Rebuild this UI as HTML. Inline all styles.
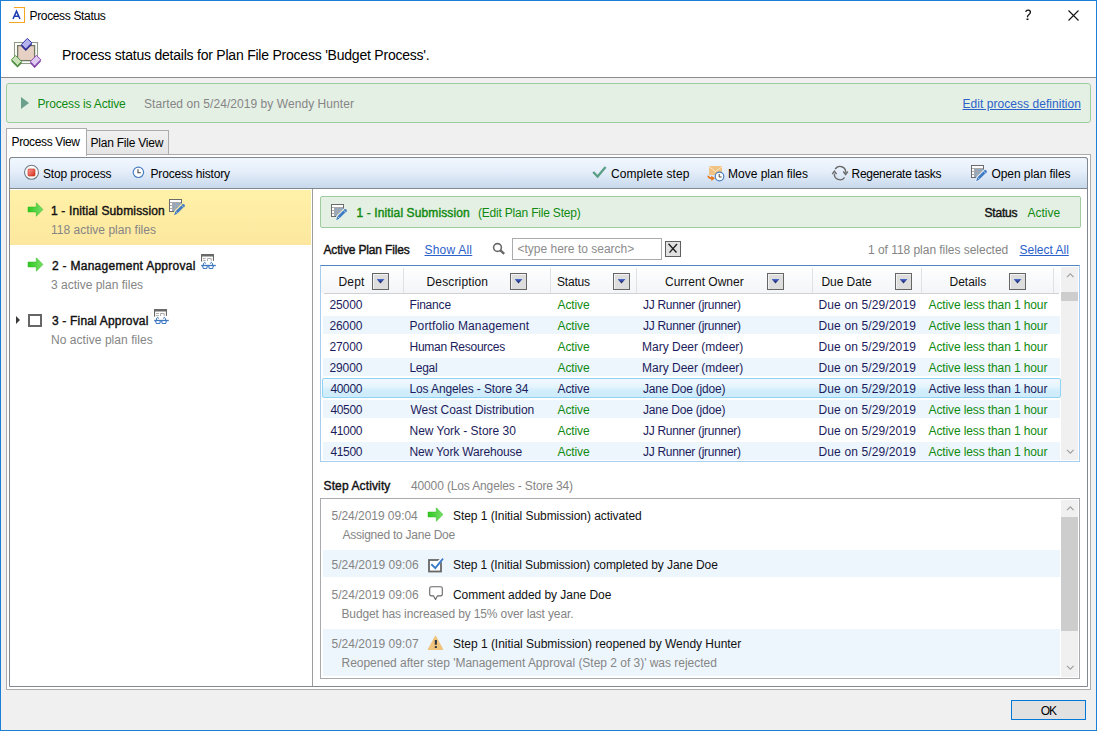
<!DOCTYPE html>
<html><head><meta charset="utf-8"><title>Process Status</title>
<style>
html,body{margin:0;padding:0;width:1097px;height:731px;overflow:hidden;background:#f0f0f0}
.a{position:absolute;box-sizing:border-box}
.t{position:absolute;white-space:nowrap;font-family:'Liberation Sans',sans-serif;line-height:1}
svg{position:absolute;overflow:visible}
.fb{position:absolute;box-sizing:border-box;width:17px;height:17px;border:1px solid #656565;background:#dddddd;box-shadow:inset 1px 1px 0 #f2f2f2}
.fb:after{content:"";position:absolute;left:3.5px;top:5px;width:8px;height:4.5px;clip-path:polygon(0 0,100% 0,50% 100%);background:linear-gradient(#4f6fd6,#283a8a 50%,#1a1a3a)}
.sep{position:absolute;width:1px;top:268px;height:25px;background:#dfe1e4}
.band{position:absolute;background:#eef6fd}
</style></head><body>
<!-- window frame -->
<div class="a" style="left:0;top:0;width:1097px;height:731px;border:1px solid #1a7fd5;background:#f0f0f0"></div>
<div class="a" style="left:1px;top:1px;width:1095px;height:76px;background:#fff"></div>
<div class="a" style="left:1px;top:77px;width:1095px;height:1px;background:#8c8c8c"></div>

<!-- app icon -->
<div class="a" style="left:14px;top:7px;width:11px;height:1px;background:#f5a623"></div>
<div class="a" style="left:24px;top:7px;width:1px;height:16px;background:#f5a623"></div>
<div class="a" style="left:9px;top:22px;width:16px;height:1px;background:#f5a623"></div>
<svg style="left:12px;top:10px" width="9" height="10" viewBox="0 0 9 10"><path d="M1 9 L4.5 1.2 L8 9 M2.4 6.3 H6.6" fill="none" stroke="#1e3cb4" stroke-width="1.5"/></svg>
<!-- help and close -->
<svg style="left:1024px;top:9px" width="10" height="12" viewBox="0 0 10 12"><path d="M1.9 2.3 Q2.9 1 4.5 1.1 Q6.5 1.4 6.4 3.3 Q6.3 4.7 4.8 5.8 Q3.5 6.8 3.5 7.8" fill="none" stroke="#111" stroke-width="1.35" stroke-linecap="round"/><rect x="2.5" y="9.5" width="2" height="1.5" fill="#111"/></svg>
<svg style="left:1068px;top:10px" width="11" height="11" viewBox="0 0 11 11"><path d="M0.5 0.5 L10.5 10.5 M10.5 0.5 L0.5 10.5" stroke="#111" stroke-width="1.1"/></svg>

<!-- header icon -->
<svg style="left:8px;top:34px" width="40" height="38" viewBox="0 0 40 38"><rect x="6.5" y="8.5" width="23" height="21" fill="#fff" stroke="#8f9c86" stroke-width="1.1"/><rect x="9.6" y="11.6" width="17" height="15" fill="#e6cfc3" stroke="#6f7a62" stroke-width="1.3"/><path d="M13.4 10.6 L17.8 15 L23.8 8.8 L23.8 10.8 L17.8 17 L13.4 12.6 Z" fill="#28268e"/><path d="M13.4 10.6 L19.3 4.4 L23.8 8.8 L17.8 15 Z" fill="#b4b2ec" stroke="#3532a8" stroke-width="1" stroke-linejoin="round"/><path d="M3.5 25.6 L9.5 31.6 L13.6 27.4 L13.6 29.4 L9.5 33.6 L3.5 27.6 Z" fill="#4a8a3a"/><path d="M3.5 25.6 L7.6 21.6 L13.6 27.4 L9.5 31.6 Z" fill="#c9e0b9" stroke="#5b9a4a" stroke-width="1" stroke-linejoin="round"/><path d="M22.4 27.6 L26.6 32 L32.8 25.6 L32.8 27.6 L26.6 34 L22.4 29.6 Z" fill="#7a389f"/><path d="M22.4 27.6 L28.4 21.4 L32.8 25.6 L26.6 32 Z" fill="#dfcaf2" stroke="#8f4fb8" stroke-width="1" stroke-linejoin="round"/></svg>

<!-- status bar -->
<div class="a" style="left:6px;top:83px;width:1085px;height:40px;border:1px solid #9fcc9f;border-radius:3px;background:#e5f0e5"></div>
<svg style="left:21px;top:97px" width="9" height="13" viewBox="0 0 9 13"><path d="M0 0 L8 6 L0 12 Z" fill="#6aa08c"/></svg>

<!-- tabs -->
<div class="a" style="left:86px;top:130px;width:83px;height:25px;border:1px solid #acacac;background:linear-gradient(#f0f0f0,#e5e5e5)"></div>
<div class="a" style="left:6px;top:154px;width:1085px;height:536px;border:1px solid #acacac;background:#fff"></div>
<div class="a" style="left:6px;top:128px;width:81px;height:28px;border:1px solid #acacac;border-bottom:0;background:#fff"></div>

<!-- inner content -->
<div class="a" style="left:9px;top:157px;width:1079px;height:530px;border:1px solid #828790;border-radius:3px 3px 0 0;background:#fff"></div>
<div class="a" style="left:9px;top:157px;width:1079px;height:32px;border:1px solid #828790;border-radius:3px 3px 0 0;background:linear-gradient(#f1f7fe,#e5eefa 45%,#c8d9ec)"></div>

<!-- toolbar icons -->
<svg style="left:23px;top:164px" width="17" height="17" viewBox="0 0 17 17">
  <defs><linearGradient id="rg" x1="0" y1="0" x2="1" y2="1"><stop offset="0" stop-color="#ff9a9a"/><stop offset="1" stop-color="#d0301a"/></linearGradient></defs>
  <circle cx="8.5" cy="8.3" r="7" fill="#fafafa" stroke="#6f7c88" stroke-width="1.1"/>
  <rect x="5" y="5" width="7" height="7" rx="1" fill="url(#rg)" stroke="#c02810" stroke-width="0.6"/>
</svg>
<svg style="left:132px;top:166px" width="13" height="13" viewBox="0 0 13 13">
  <circle cx="6.4" cy="6.3" r="5.2" fill="#fff" stroke="#4a7fc0" stroke-width="1.2"/>
  <path d="M6 3.2 V6.8 H8.8" fill="none" stroke="#444" stroke-width="1.1"/>
</svg>
<svg style="left:590px;top:164px" width="18" height="16" viewBox="0 0 18 16"><path d="M3.2 8 L7.6 12.6 L15.6 3" fill="none" stroke="#5a9e84" stroke-width="2.3"/></svg>
<svg style="left:706px;top:164px" width="20" height="19" viewBox="0 0 20 19">
  <rect x="3" y="2" width="13" height="9" fill="#f0c384"/>
  <path d="M3 2.5 L9.5 7.5 L16 2.5" fill="none" stroke="#fbe6c4" stroke-width="1"/>
  <circle cx="13.5" cy="12.5" r="4.3" fill="#fff" stroke="#4a80c0" stroke-width="1.2"/>
  <path d="M13.2 10 V13 H15.6" fill="none" stroke="#444" stroke-width="1"/>
  <path d="M2.2 11.8 Q2.4 14.4 6 14.4" fill="none" stroke="#e8761c" stroke-width="1.7"/><path d="M5.2 11.8 L9 14.3 L5.4 16.9 Z" fill="#e8761c"/>
</svg>
<svg style="left:830px;top:164px" width="20" height="18" viewBox="0 0 20 18">
  <path d="M5.2 5.2 A5.6 5.6 0 0 1 15.6 8.6" fill="none" stroke="#6a6a6a" stroke-width="1.4"/>
  <path d="M14.6 13.3 A5.6 5.6 0 0 1 4.4 9.6" fill="none" stroke="#6a6a6a" stroke-width="1.4"/>
  <path d="M13.3 7.5 L15.6 10.5 L17.8 7.5" fill="none" stroke="#6a6a6a" stroke-width="1.4"/>
  <path d="M2.2 10.2 L4.4 7.2 L6.6 10.2" fill="none" stroke="#6a6a6a" stroke-width="1.4"/>
</svg>
<!-- open plan files icon (grid + pencil) -->
<svg style="left:970px;top:164px" width="20" height="20" viewBox="0 0 20 20"><rect x="1" y="1" width="13" height="13" fill="#6b6b6b"/><rect x="2" y="2" width="11" height="11" fill="#a9a9a9"/><rect x="2" y="2" width="11" height="2" fill="#fff"/><rect x="2" y="5" width="2" height="2" fill="#fff"/><rect x="5" y="5" width="2" height="2" fill="rgba(95,165,240,0.38)"/><rect x="8" y="5" width="2" height="2" fill="rgba(95,165,240,0.38)"/><rect x="11" y="5" width="2" height="2" fill="rgba(95,165,240,0.38)"/><rect x="2" y="8" width="2" height="2" fill="#fff"/><rect x="5" y="8" width="2" height="2" fill="rgba(95,165,240,0.38)"/><rect x="8" y="8" width="2" height="2" fill="rgba(95,165,240,0.38)"/><rect x="11" y="8" width="2" height="2" fill="rgba(95,165,240,0.38)"/><rect x="2" y="11" width="2" height="2" fill="#fff"/><rect x="5" y="11" width="2" height="2" fill="rgba(95,165,240,0.38)"/><rect x="8" y="11" width="2" height="2" fill="rgba(95,165,240,0.38)"/><rect x="11" y="11" width="2" height="2" fill="rgba(95,165,240,0.38)"/><path d="M5.8 14.2 L14.2 14.2 L14.2 5.8 Z" fill="#e0eaf6"/><path d="M6.2 17.2 L7.3 13.6 L13.6 7.3 L15.6 9.3 L9.3 15.6 Z" fill="#e0eaf6" stroke="#e0eaf6" stroke-width="2.2" stroke-linejoin="round"/><circle cx="15.2" cy="7.7" r="2.6" fill="#e0eaf6"/><path d="M6.2 17.2 L7.3 13.6 L13.6 7.3 L15.6 9.3 L9.3 15.6 Z" fill="#3f7bc4"/><circle cx="15.2" cy="7.7" r="1.7" fill="#3f7bc4"/><path d="M7.6 13.3 L10 15.8 M13.2 7 L15.9 9.6" stroke="#e0eaf6" stroke-width="0.7"/></svg>

<!-- left list -->
<div class="a" style="left:10px;top:190px;width:301px;height:55px;background:linear-gradient(#fff2a8,#fde79f)"></div>
<div class="a" style="left:312px;top:189px;width:1px;height:497px;background:#9c9c9c"></div>
<svg style="left:27px;top:202px" width="17" height="15" viewBox="0 0 17 15"><defs><linearGradient id="ga" x1="0" x2="1"><stop offset="0" stop-color="#2ec81e"/><stop offset="1" stop-color="#7ade6a"/></linearGradient></defs><path d="M1 5 H9.3 V0.8 L16 7.5 L9.3 14.2 V10 H1 Z" fill="url(#ga)" stroke="#2eb81e" stroke-width="0.5"/></svg>
<svg style="left:27px;top:257px" width="17" height="15" viewBox="0 0 17 15"><path d="M1 5 H9.3 V0.8 L16 7.5 L9.3 14.2 V10 H1 Z" fill="url(#ga)" stroke="#2eb81e" stroke-width="0.5"/></svg>
<svg style="left:168px;top:198px" width="20" height="20" viewBox="0 0 20 20"><rect x="1" y="1" width="13" height="13" fill="#6b6b6b"/><rect x="2" y="2" width="11" height="11" fill="#a9a9a9"/><rect x="2" y="2" width="11" height="2" fill="#fff"/><rect x="2" y="5" width="2" height="2" fill="#fff"/><rect x="5" y="5" width="2" height="2" fill="rgba(95,165,240,0.38)"/><rect x="8" y="5" width="2" height="2" fill="rgba(95,165,240,0.38)"/><rect x="11" y="5" width="2" height="2" fill="rgba(95,165,240,0.38)"/><rect x="2" y="8" width="2" height="2" fill="#fff"/><rect x="5" y="8" width="2" height="2" fill="rgba(95,165,240,0.38)"/><rect x="8" y="8" width="2" height="2" fill="rgba(95,165,240,0.38)"/><rect x="11" y="8" width="2" height="2" fill="rgba(95,165,240,0.38)"/><rect x="2" y="11" width="2" height="2" fill="#fff"/><rect x="5" y="11" width="2" height="2" fill="rgba(95,165,240,0.38)"/><rect x="8" y="11" width="2" height="2" fill="rgba(95,165,240,0.38)"/><rect x="11" y="11" width="2" height="2" fill="rgba(95,165,240,0.38)"/><path d="M5.8 14.2 L14.2 14.2 L14.2 5.8 Z" fill="#fdeba6"/><path d="M6.2 17.2 L7.3 13.6 L13.6 7.3 L15.6 9.3 L9.3 15.6 Z" fill="#fdeba6" stroke="#fdeba6" stroke-width="2.2" stroke-linejoin="round"/><circle cx="15.2" cy="7.7" r="2.6" fill="#fdeba6"/><path d="M6.2 17.2 L7.3 13.6 L13.6 7.3 L15.6 9.3 L9.3 15.6 Z" fill="#3f7bc4"/><circle cx="15.2" cy="7.7" r="1.7" fill="#3f7bc4"/><path d="M7.6 13.3 L10 15.8 M13.2 7 L15.9 9.6" stroke="#fdeba6" stroke-width="0.7"/></svg>
<svg style="left:196px;top:250px" width="22" height="22" viewBox="0 0 22 22"><rect x="5" y="4" width="13" height="2.5" fill="#6a6a6a"/><rect x="5" y="4" width="1.1" height="7.6" fill="#6a6a6a"/><rect x="16.9" y="4" width="1.1" height="6.9" fill="#6a6a6a"/><path d="M7 8.5 H9.8 M7 10.6 H9.8 M11.5 11 V8.5 H15.2 V11" fill="none" stroke="#a4a4a4" stroke-width="0.9"/><path d="M5.2 15.5 H19.8" stroke="#3d78c0" stroke-width="1.3"/><path d="M6.4 15.5 L7.2 17.9 Q7.5 18.5 8.3 18.5 H10 Q10.8 18.5 11 17.8 L11.3 15.5 M17.6 15.5 L16.8 17.9 Q16.5 18.5 15.7 18.5 H14 Q13.2 18.5 13 17.8 L12.7 15.5" fill="none" stroke="#3d78c0" stroke-width="1.1"/><path d="M7.3 15.2 Q7.6 12.3 8.6 12.4 Q9.5 12.5 9.6 13.6 M16.7 15.2 Q16.4 12.3 15.4 12.4 Q14.5 12.5 14.4 13.6" fill="none" stroke="#3d78c0" stroke-width="1"/></svg>
<svg style="left:15px;top:315px" width="6" height="10" viewBox="0 0 6 10"><path d="M1 1 L5 5 L1 9 Z" fill="#3a3a3a"/></svg>
<div class="a" style="left:28px;top:314px;width:14px;height:13px;border:2px solid #666;background:#fff"></div>
<svg style="left:149px;top:305px" width="22" height="22" viewBox="0 0 22 22"><rect x="5" y="4" width="13" height="2.5" fill="#6a6a6a"/><rect x="5" y="4" width="1.1" height="7.6" fill="#6a6a6a"/><rect x="16.9" y="4" width="1.1" height="6.9" fill="#6a6a6a"/><path d="M7 8.5 H9.8 M7 10.6 H9.8 M11.5 11 V8.5 H15.2 V11" fill="none" stroke="#a4a4a4" stroke-width="0.9"/><path d="M5.2 15.5 H19.8" stroke="#3d78c0" stroke-width="1.3"/><path d="M6.4 15.5 L7.2 17.9 Q7.5 18.5 8.3 18.5 H10 Q10.8 18.5 11 17.8 L11.3 15.5 M17.6 15.5 L16.8 17.9 Q16.5 18.5 15.7 18.5 H14 Q13.2 18.5 13 17.8 L12.7 15.5" fill="none" stroke="#3d78c0" stroke-width="1.1"/><path d="M7.3 15.2 Q7.6 12.3 8.6 12.4 Q9.5 12.5 9.6 13.6 M16.7 15.2 Q16.4 12.3 15.4 12.4 Q14.5 12.5 14.4 13.6" fill="none" stroke="#3d78c0" stroke-width="1"/></svg>

<!-- step box -->
<div class="a" style="left:320px;top:196px;width:761px;height:32px;border:1px solid #9fcc9f;border-radius:2px;background:#e5f0e5"></div>
<svg style="left:330px;top:203px" width="20" height="20" viewBox="0 0 20 20"><rect x="1" y="1" width="13" height="13" fill="#6b6b6b"/><rect x="2" y="2" width="11" height="11" fill="#a9a9a9"/><rect x="2" y="2" width="11" height="2" fill="#fff"/><rect x="2" y="5" width="2" height="2" fill="#fff"/><rect x="5" y="5" width="2" height="2" fill="rgba(95,165,240,0.38)"/><rect x="8" y="5" width="2" height="2" fill="rgba(95,165,240,0.38)"/><rect x="11" y="5" width="2" height="2" fill="rgba(95,165,240,0.38)"/><rect x="2" y="8" width="2" height="2" fill="#fff"/><rect x="5" y="8" width="2" height="2" fill="rgba(95,165,240,0.38)"/><rect x="8" y="8" width="2" height="2" fill="rgba(95,165,240,0.38)"/><rect x="11" y="8" width="2" height="2" fill="rgba(95,165,240,0.38)"/><rect x="2" y="11" width="2" height="2" fill="#fff"/><rect x="5" y="11" width="2" height="2" fill="rgba(95,165,240,0.38)"/><rect x="8" y="11" width="2" height="2" fill="rgba(95,165,240,0.38)"/><rect x="11" y="11" width="2" height="2" fill="rgba(95,165,240,0.38)"/><path d="M5.8 14.2 L14.2 14.2 L14.2 5.8 Z" fill="#e5f0e5"/><path d="M6.2 17.2 L7.3 13.6 L13.6 7.3 L15.6 9.3 L9.3 15.6 Z" fill="#e5f0e5" stroke="#e5f0e5" stroke-width="2.2" stroke-linejoin="round"/><circle cx="15.2" cy="7.7" r="2.6" fill="#e5f0e5"/><path d="M6.2 17.2 L7.3 13.6 L13.6 7.3 L15.6 9.3 L9.3 15.6 Z" fill="#3f7bc4"/><circle cx="15.2" cy="7.7" r="1.7" fill="#3f7bc4"/><path d="M7.6 13.3 L10 15.8 M13.2 7 L15.9 9.6" stroke="#e5f0e5" stroke-width="0.7"/></svg>

<!-- search -->
<svg style="left:491px;top:241px" width="17" height="17" viewBox="0 0 17 17"><circle cx="6.5" cy="6.5" r="3.9" fill="none" stroke="#6a6a6a" stroke-width="1.6"/><path d="M9.2 9.2 L13.2 12.8" stroke="#6a6a6a" stroke-width="2.4"/></svg>
<div class="a" style="left:512px;top:238px;width:150px;height:22px;border:1px solid #ababab;background:#fff"></div>
<div class="a" style="left:665px;top:241px;width:16px;height:16px;border:1px solid #5f5f5f;background:#e1e1e1"></div>
<svg style="left:665px;top:241px" width="16" height="16" viewBox="0 0 16 16"><path d="M3.5 2.8 L11.5 11.5 M12 3 L4.5 11.6" stroke="#222" stroke-width="1.4"/></svg>

<!-- grid -->
<div class="a" style="left:320px;top:265px;width:760px;height:197px;border:1px solid #a7cdef;border-top-color:#4f86bd;background:#fff"></div>
<div class="a" style="left:321px;top:266px;width:739px;height:27px;background:linear-gradient(#fff,#f3f5f8)"></div>
<div class="a" style="left:324px;top:293px;width:735px;height:1px;background:#cfd1d4"></div>
<div class="sep" style="left:403px"></div><div class="sep" style="left:550px"></div><div class="sep" style="left:636px"></div><div class="sep" style="left:812px"></div><div class="sep" style="left:921px"></div><div class="sep" style="left:1053px"></div>
<div class="fb" style="left:372px;top:273px"></div><div class="fb" style="left:510px;top:273px"></div><div class="fb" style="left:613px;top:273px"></div><div class="fb" style="left:767px;top:273px"></div><div class="fb" style="left:895px;top:273px"></div><div class="fb" style="left:1009px;top:273px"></div>
<div class="band" style="left:323px;top:316px;width:737px;height:18px"></div>
<div class="band" style="left:323px;top:358px;width:737px;height:18px"></div>
<div class="band" style="left:323px;top:400px;width:737px;height:18px"></div>
<div class="band" style="left:323px;top:442px;width:737px;height:18px"></div>
<div class="a" style="left:322px;top:378px;width:739px;height:20px;border:1px solid #8fd3f5;border-radius:2px;background:linear-gradient(#f1f9fe,#e4f4fd 45%,#d3eefc 60%,#cdebfb)"></div>
<div class="a" style="left:1061px;top:267px;width:17px;height:193px;background:#f0f0f0"></div>
<div class="a" style="left:1061px;top:292px;width:17px;height:9px;background:#cdcdcd"></div>
<svg style="left:1066px;top:272px" width="9" height="7" viewBox="0 0 9 7"><path d="M1 5.2 L4.3 1.8 L7.6 5.2" fill="none" stroke="#a0a0a0" stroke-width="1.2"/></svg>
<svg style="left:1066px;top:448px" width="9" height="7" viewBox="0 0 9 7"><path d="M1 1.8 L4.3 5.2 L7.6 1.8" fill="none" stroke="#a0a0a0" stroke-width="1.2"/></svg>

<!-- step activity -->
<div class="a" style="left:320px;top:498px;width:760px;height:181px;border:1px solid #a9abae;background:#fff"></div>
<div class="band" style="left:323px;top:550px;width:737px;height:27px"></div>
<div class="band" style="left:323px;top:629px;width:737px;height:47px"></div>
<div class="a" style="left:1061px;top:500px;width:17px;height:177px;background:#f0f0f0"></div>
<div class="a" style="left:1061px;top:517px;width:17px;height:114px;background:#cdcdcd"></div>
<svg style="left:1066px;top:505px" width="9" height="7" viewBox="0 0 9 7"><path d="M1 5.2 L4.3 1.8 L7.6 5.2" fill="none" stroke="#a0a0a0" stroke-width="1.2"/></svg>
<svg style="left:1066px;top:664px" width="9" height="7" viewBox="0 0 9 7"><path d="M1 1.8 L4.3 5.2 L7.6 1.8" fill="none" stroke="#a0a0a0" stroke-width="1.2"/></svg>
<svg style="left:427px;top:507px" width="17" height="15" viewBox="0 0 17 15"><path d="M1 5 H9.3 V0.8 L16 7.5 L9.3 14.2 V10 H1 Z" fill="url(#ga)" stroke="#2eb81e" stroke-width="0.5"/></svg>
<svg style="left:427px;top:556px" width="17" height="17" viewBox="0 0 17 17"><rect x="2" y="4" width="12" height="11.5" fill="#fff" stroke="#666" stroke-width="1.8"/><path d="M12 6 L16 2.6" fill="none" stroke="#fff" stroke-width="3.4"/><path d="M4.3 8.3 L8.3 12 L16 2.6" fill="none" stroke="#3c7ccc" stroke-width="1.9"/></svg>
<svg style="left:427px;top:585px" width="17" height="16" viewBox="0 0 17 16"><path d="M4.4 1.8 H13.6 Q15.3 1.8 15.3 3.5 V9.2 Q15.3 10.9 13.6 10.9 H10.4 L8.5 14.4 L6.6 10.9 H4.4 Q2.7 10.9 2.7 9.2 V3.5 Q2.7 1.8 4.4 1.8 Z" fill="#fff" stroke="#666" stroke-width="1.1" stroke-linejoin="round"/></svg>
<svg style="left:427px;top:635px" width="17" height="16" viewBox="0 0 17 16"><path d="M8.5 1.3 L15.6 14.3 H1.4 Z" fill="#f0c47c" stroke="#f0c47c" stroke-width="1.2" stroke-linejoin="round"/><rect x="7.8" y="5" width="2.1" height="4.7" fill="#30343c"/><rect x="7.8" y="11.1" width="2.1" height="1.9" fill="#30343c"/></svg>

<!-- OK button -->
<div class="a" style="left:1011px;top:700px;width:75px;height:20px;border:1px solid #0078d7;background:#e1e1e1"></div>


<div class="t" style="left:29.50px;top:10px;font-size:12px;font-weight:normal;color:#000;letter-spacing:-0.346px;">Process Status</div>
<div class="t" style="left:62.00px;top:48px;font-size:14px;font-weight:normal;color:#000;letter-spacing:-0.221px;">Process status details for Plan File Process 'Budget Process'.</div>
<div class="t" style="left:37.50px;top:98px;font-size:12px;font-weight:normal;color:#108a10;letter-spacing:-0.156px;">Process is Active</div>
<div class="t" style="left:144.00px;top:98px;font-size:12px;font-weight:normal;color:#858585;letter-spacing:0.057px;">Started on 5/24/2019 by Wendy Hunter</div>
<div class="t" style="left:962.50px;top:98px;font-size:12px;font-weight:normal;color:#2a62c9;letter-spacing:0.045px;text-decoration:underline">Edit process definition</div>
<div class="t" style="left:11.50px;top:136px;font-size:12px;font-weight:normal;color:#000;letter-spacing:-0.364px;">Process View</div>
<div class="t" style="left:90.50px;top:137px;font-size:12px;font-weight:normal;color:#000;letter-spacing:-0.231px;">Plan File View</div>
<div class="t" style="left:43.00px;top:168px;font-size:12px;font-weight:normal;color:#000;letter-spacing:-0.136px;">Stop process</div>
<div class="t" style="left:150.50px;top:168px;font-size:12px;font-weight:normal;color:#000;letter-spacing:-0.179px;">Process history</div>
<div class="t" style="left:611.00px;top:168px;font-size:12px;font-weight:normal;color:#000;letter-spacing:0.083px;">Complete step</div>
<div class="t" style="left:728.00px;top:168px;font-size:12px;font-weight:normal;color:#000;letter-spacing:0.000px;">Move plan files</div>
<div class="t" style="left:851.50px;top:168px;font-size:12px;font-weight:normal;color:#000;letter-spacing:-0.267px;">Regenerate tasks</div>
<div class="t" style="left:991.50px;top:168px;font-size:12px;font-weight:normal;color:#000;letter-spacing:-0.071px;">Open plan files</div>
<div class="t" style="left:51.00px;top:205px;font-size:12px;font-weight:normal;-webkit-text-stroke:0.4px #111;color:#111;letter-spacing:0.143px;">1 - Initial Submission</div>
<div class="t" style="left:51.00px;top:224px;font-size:12px;font-weight:normal;color:#858585;letter-spacing:0.025px;">118 active plan files</div>
<div class="t" style="left:52.00px;top:260px;font-size:12px;font-weight:normal;-webkit-text-stroke:0.4px #111;color:#111;letter-spacing:0.273px;">2 - Management Approval</div>
<div class="t" style="left:51.00px;top:279px;font-size:12px;font-weight:normal;color:#858585;letter-spacing:0.000px;">3 active plan files</div>
<div class="t" style="left:52.00px;top:315px;font-size:12px;font-weight:normal;-webkit-text-stroke:0.4px #111;color:#111;letter-spacing:0.176px;">3 - Final Approval</div>
<div class="t" style="left:51.00px;top:334px;font-size:12px;font-weight:normal;color:#858585;letter-spacing:0.053px;">No active plan files</div>
<div class="t" style="left:356.50px;top:207px;font-size:12px;font-weight:normal;-webkit-text-stroke:0.4px #108a10;color:#108a10;letter-spacing:0.119px;">1 - Initial Submission</div>
<div class="t" style="left:478.00px;top:207px;font-size:12px;font-weight:normal;color:#108a10;letter-spacing:-0.200px;">(Edit Plan File Step)</div>
<div class="t" style="left:984.50px;top:207px;font-size:12px;font-weight:normal;-webkit-text-stroke:0.4px #111;color:#111;letter-spacing:-0.200px;">Status</div>
<div class="t" style="left:1027.50px;top:207px;font-size:12px;font-weight:normal;color:#108a10;letter-spacing:0.000px;">Active</div>
<div class="t" style="left:323.50px;top:244px;font-size:12px;font-weight:normal;-webkit-text-stroke:0.4px #111;color:#111;letter-spacing:-0.156px;">Active Plan Files</div>
<div class="t" style="left:424.50px;top:244px;font-size:12px;font-weight:normal;color:#2a62c9;letter-spacing:0.214px;text-decoration:underline">Show All</div>
<div class="t" style="left:517.50px;top:243px;font-size:12px;font-weight:normal;color:#8c8c8c;letter-spacing:0.000px;">&lt;type here to search&gt;</div>
<div class="t" style="left:868.00px;top:244px;font-size:12px;font-weight:normal;color:#858585;letter-spacing:-0.037px;">1 of 118 plan files selected</div>
<div class="t" style="left:1019.50px;top:244px;font-size:12px;font-weight:normal;color:#2a62c9;letter-spacing:0.000px;text-decoration:underline">Select All</div>
<div class="t" style="left:338.50px;top:276px;font-size:12px;font-weight:normal;color:#111;letter-spacing:0.167px;">Dept</div>
<div class="t" style="left:426.50px;top:276px;font-size:12px;font-weight:normal;color:#111;letter-spacing:0.150px;">Description</div>
<div class="t" style="left:557.00px;top:276px;font-size:12px;font-weight:normal;color:#111;letter-spacing:-0.200px;">Status</div>
<div class="t" style="left:665.00px;top:276px;font-size:12px;font-weight:normal;color:#111;letter-spacing:0.000px;">Current Owner</div>
<div class="t" style="left:821.50px;top:276px;font-size:12px;font-weight:normal;color:#111;letter-spacing:-0.071px;">Due Date</div>
<div class="t" style="left:949.50px;top:276px;font-size:12px;font-weight:normal;color:#111;letter-spacing:0.000px;">Details</div>
<div class="t" style="left:329.50px;top:299px;font-size:12px;font-weight:normal;color:#1c1c5c;letter-spacing:-0.125px;">25000</div>
<div class="t" style="left:409.50px;top:299px;font-size:12px;font-weight:normal;color:#1c1c5c;letter-spacing:-0.183px;">Finance</div>
<div class="t" style="left:557.50px;top:299px;font-size:12px;font-weight:normal;color:#108a10;letter-spacing:-0.100px;">Active</div>
<div class="t" style="left:643.00px;top:299px;font-size:12px;font-weight:normal;color:#1c1c5c;letter-spacing:-0.300px;">JJ Runner (jrunner)</div>
<div class="t" style="left:818.50px;top:299px;font-size:12px;font-weight:normal;color:#1c1c5c;letter-spacing:0.133px;">Due on 5/29/2019</div>
<div class="t" style="left:928.50px;top:299px;font-size:12px;font-weight:normal;color:#108a10;letter-spacing:-0.114px;">Active less than 1 hour</div>
<div class="t" style="left:329.50px;top:320px;font-size:12px;font-weight:normal;color:#1c1c5c;letter-spacing:-0.125px;">26000</div>
<div class="t" style="left:409.50px;top:320px;font-size:12px;font-weight:normal;color:#1c1c5c;letter-spacing:0.111px;">Portfolio Management</div>
<div class="t" style="left:557.50px;top:320px;font-size:12px;font-weight:normal;color:#108a10;letter-spacing:-0.100px;">Active</div>
<div class="t" style="left:643.00px;top:320px;font-size:12px;font-weight:normal;color:#1c1c5c;letter-spacing:-0.300px;">JJ Runner (jrunner)</div>
<div class="t" style="left:818.50px;top:320px;font-size:12px;font-weight:normal;color:#1c1c5c;letter-spacing:0.133px;">Due on 5/29/2019</div>
<div class="t" style="left:928.50px;top:320px;font-size:12px;font-weight:normal;color:#108a10;letter-spacing:-0.114px;">Active less than 1 hour</div>
<div class="t" style="left:329.50px;top:341px;font-size:12px;font-weight:normal;color:#1c1c5c;letter-spacing:-0.125px;">27000</div>
<div class="t" style="left:409.50px;top:341px;font-size:12px;font-weight:normal;color:#1c1c5c;letter-spacing:-0.264px;">Human Resources</div>
<div class="t" style="left:557.50px;top:341px;font-size:12px;font-weight:normal;color:#108a10;letter-spacing:-0.100px;">Active</div>
<div class="t" style="left:642.00px;top:341px;font-size:12px;font-weight:normal;color:#1c1c5c;letter-spacing:0.000px;">Mary Deer (mdeer)</div>
<div class="t" style="left:818.50px;top:341px;font-size:12px;font-weight:normal;color:#1c1c5c;letter-spacing:0.133px;">Due on 5/29/2019</div>
<div class="t" style="left:928.50px;top:341px;font-size:12px;font-weight:normal;color:#108a10;letter-spacing:-0.114px;">Active less than 1 hour</div>
<div class="t" style="left:329.50px;top:362px;font-size:12px;font-weight:normal;color:#1c1c5c;letter-spacing:-0.125px;">29000</div>
<div class="t" style="left:409.50px;top:362px;font-size:12px;font-weight:normal;color:#1c1c5c;letter-spacing:-0.300px;">Legal</div>
<div class="t" style="left:557.50px;top:362px;font-size:12px;font-weight:normal;color:#108a10;letter-spacing:-0.100px;">Active</div>
<div class="t" style="left:642.00px;top:362px;font-size:12px;font-weight:normal;color:#1c1c5c;letter-spacing:0.000px;">Mary Deer (mdeer)</div>
<div class="t" style="left:818.50px;top:362px;font-size:12px;font-weight:normal;color:#1c1c5c;letter-spacing:0.133px;">Due on 5/29/2019</div>
<div class="t" style="left:928.50px;top:362px;font-size:12px;font-weight:normal;color:#108a10;letter-spacing:-0.114px;">Active less than 1 hour</div>
<div class="t" style="left:330.50px;top:383px;font-size:12px;font-weight:normal;color:#1c1c5c;letter-spacing:-0.375px;">40000</div>
<div class="t" style="left:409.50px;top:383px;font-size:12px;font-weight:normal;color:#1c1c5c;letter-spacing:-0.119px;">Los Angeles - Store 34</div>
<div class="t" style="left:557.50px;top:383px;font-size:12px;font-weight:normal;color:#1c1c5c;letter-spacing:-0.100px;">Active</div>
<div class="t" style="left:643.00px;top:383px;font-size:12px;font-weight:normal;color:#1c1c5c;letter-spacing:-0.214px;">Jane Doe (jdoe)</div>
<div class="t" style="left:818.50px;top:383px;font-size:12px;font-weight:normal;color:#1c1c5c;letter-spacing:0.133px;">Due on 5/29/2019</div>
<div class="t" style="left:928.50px;top:383px;font-size:12px;font-weight:normal;color:#1c1c5c;letter-spacing:-0.114px;">Active less than 1 hour</div>
<div class="t" style="left:330.50px;top:404px;font-size:12px;font-weight:normal;color:#1c1c5c;letter-spacing:-0.375px;">40500</div>
<div class="t" style="left:410.50px;top:404px;font-size:12px;font-weight:normal;color:#1c1c5c;letter-spacing:-0.068px;">West Coast Distribution</div>
<div class="t" style="left:557.50px;top:404px;font-size:12px;font-weight:normal;color:#108a10;letter-spacing:-0.100px;">Active</div>
<div class="t" style="left:643.00px;top:404px;font-size:12px;font-weight:normal;color:#1c1c5c;letter-spacing:-0.214px;">Jane Doe (jdoe)</div>
<div class="t" style="left:818.50px;top:404px;font-size:12px;font-weight:normal;color:#1c1c5c;letter-spacing:0.133px;">Due on 5/29/2019</div>
<div class="t" style="left:928.50px;top:404px;font-size:12px;font-weight:normal;color:#108a10;letter-spacing:-0.114px;">Active less than 1 hour</div>
<div class="t" style="left:330.50px;top:425px;font-size:12px;font-weight:normal;color:#1c1c5c;letter-spacing:-0.375px;">41000</div>
<div class="t" style="left:409.50px;top:425px;font-size:12px;font-weight:normal;color:#1c1c5c;letter-spacing:-0.022px;">New York - Store 30</div>
<div class="t" style="left:557.50px;top:425px;font-size:12px;font-weight:normal;color:#108a10;letter-spacing:-0.100px;">Active</div>
<div class="t" style="left:643.00px;top:425px;font-size:12px;font-weight:normal;color:#1c1c5c;letter-spacing:-0.300px;">JJ Runner (jrunner)</div>
<div class="t" style="left:818.50px;top:425px;font-size:12px;font-weight:normal;color:#1c1c5c;letter-spacing:0.133px;">Due on 5/29/2019</div>
<div class="t" style="left:928.50px;top:425px;font-size:12px;font-weight:normal;color:#108a10;letter-spacing:-0.114px;">Active less than 1 hour</div>
<div class="t" style="left:330.50px;top:446px;font-size:12px;font-weight:normal;color:#1c1c5c;letter-spacing:-0.375px;">41500</div>
<div class="t" style="left:409.50px;top:446px;font-size:12px;font-weight:normal;color:#1c1c5c;letter-spacing:-0.135px;">New York Warehouse</div>
<div class="t" style="left:557.50px;top:446px;font-size:12px;font-weight:normal;color:#108a10;letter-spacing:-0.100px;">Active</div>
<div class="t" style="left:643.00px;top:446px;font-size:12px;font-weight:normal;color:#1c1c5c;letter-spacing:-0.300px;">JJ Runner (jrunner)</div>
<div class="t" style="left:818.50px;top:446px;font-size:12px;font-weight:normal;color:#1c1c5c;letter-spacing:0.133px;">Due on 5/29/2019</div>
<div class="t" style="left:928.50px;top:446px;font-size:12px;font-weight:normal;color:#108a10;letter-spacing:-0.114px;">Active less than 1 hour</div>
<div class="t" style="left:323.50px;top:480px;font-size:12px;font-weight:normal;-webkit-text-stroke:0.4px #111;color:#111;letter-spacing:0.125px;">Step Activity</div>
<div class="t" style="left:411.00px;top:480px;font-size:12px;font-weight:normal;color:#858585;letter-spacing:-0.138px;">40000 (Los Angeles - Store 34)</div>
<div class="t" style="left:331.50px;top:510px;font-size:12px;font-weight:normal;color:#858585;letter-spacing:-0.036px;">5/24/2019 09:04</div>
<div class="t" style="left:453.00px;top:510px;font-size:12px;font-weight:normal;color:#111;letter-spacing:-0.056px;">Step 1 (Initial Submission) activated</div>
<div class="t" style="left:342.50px;top:529px;font-size:12px;font-weight:normal;color:#858585;letter-spacing:-0.250px;">Assigned to Jane Doe</div>
<div class="t" style="left:331.50px;top:559px;font-size:12px;font-weight:normal;color:#858585;letter-spacing:0.036px;">5/24/2019 09:06</div>
<div class="t" style="left:453.00px;top:559px;font-size:12px;font-weight:normal;color:#111;letter-spacing:-0.083px;">Step 1 (Initial Submission) completed by Jane Doe</div>
<div class="t" style="left:331.50px;top:589px;font-size:12px;font-weight:normal;color:#858585;letter-spacing:0.036px;">5/24/2019 09:06</div>
<div class="t" style="left:453.00px;top:589px;font-size:12px;font-weight:normal;color:#111;letter-spacing:-0.042px;">Comment added by Jane Doe</div>
<div class="t" style="left:341.50px;top:608px;font-size:12px;font-weight:normal;color:#858585;letter-spacing:-0.131px;">Budget has increased by 15% over last year.</div>
<div class="t" style="left:331.50px;top:638px;font-size:12px;font-weight:normal;color:#858585;letter-spacing:0.036px;">5/24/2019 09:07</div>
<div class="t" style="left:453.00px;top:638px;font-size:12px;font-weight:normal;color:#111;letter-spacing:-0.020px;">Step 1 (Initial Submission) reopened by Wendy Hunter</div>
<div class="t" style="left:341.50px;top:657px;font-size:12px;font-weight:normal;color:#858585;letter-spacing:-0.022px;">Reopened after step 'Management Approval (Step 2 of 3)' was rejected</div>
<div class="t" style="left:1040.70px;top:705px;font-size:12px;font-weight:normal;color:#000;letter-spacing:-1.100px;">OK</div>
<!-- help glyph drawn as text -->
</body></html>
